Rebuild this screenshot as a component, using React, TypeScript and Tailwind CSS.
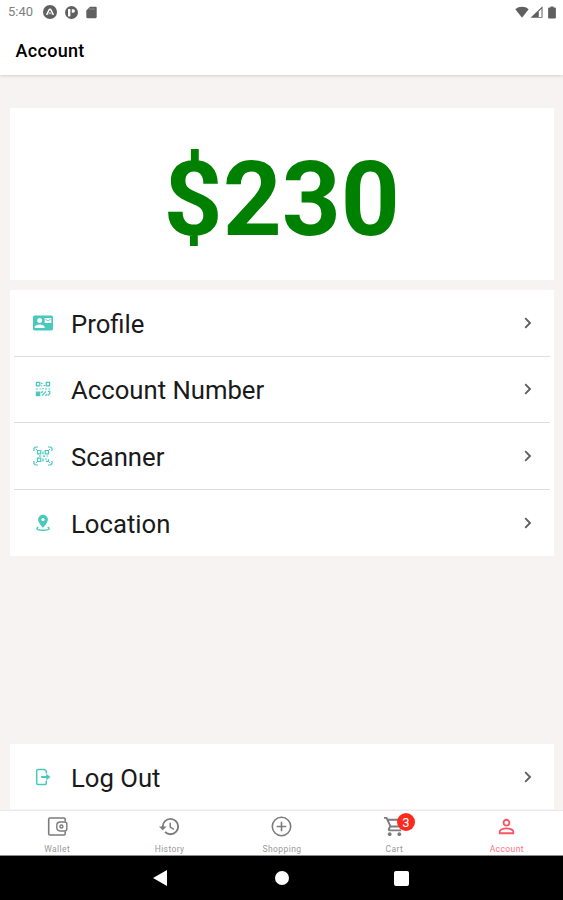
import type { ReactNode } from 'react';
import { MdContactMail, MdHistory, MdOutlineShoppingCart, MdPersonOutline } from 'react-icons/md';

function QrIcon() {
  return (
    <svg viewBox="0 0 16 16" className="w-4 h-4" fill="none" stroke="currentColor" strokeWidth="1.200">
      <path d="M1.400 1.400h3.400v3.400H1.400ZM11.200 1.400h3.400v3.400h-3.400Z" />
      <path d="M6 2.300h1.500M8.600 4.600h1.600M6 5h1.300M.8 8H3M4.500 8h1.400M7.300 7.600h1.500M10 8h2M13.500 8h1.700" />
      <path d="M1.400 11.200h3.400v3.400H1.400Z" fill="currentColor" />
      <path d="m6.300 12 1.500-1.800M7 14.600l4-4.300M10.400 14.800l1.800-1.800M12.800 10.400h2v2l-2 2.200" />
    </svg>
  );
}

function ScannerIcon() {
  return (
    <svg viewBox="0 0 20 20" className="w-5 h-5" fill="none" stroke="currentColor" strokeWidth="1.200">
      <path d="M1 5V2.300L2.300 1H5M15 1h2.700L19 2.300V5M19 15v2.700L17.700 19H15M5 19H2.300L1 17.700V15" />
      <path d="M4.500 4.500h3.300v3.300H4.500ZM12.200 4.500h3.300v3.300h-3.300ZM4.500 12.200h3.300v3.300H4.500Z" />
      <path d="m2.800 2.800 2 2M17.200 2.800l-2 2M2.800 17.200l2-2M17.200 17.200l-2-2" strokeWidth="1" />
      <path d="M6 10h2.300M10 5.500v2.700M9.800 10.200h2.500M13.700 10h1.500M10 12.400v3M11.800 13h2M13 15.300h2.500v-2" />
    </svg>
  );
}

function LocationIcon() {
  return (
    <svg viewBox="0 0 16 18" className="w-4 h-[18px]" fill="none">
      <path
        d="M8 .7a4.900 4.900 0 0 0-4.900 4.900C3.100 9 8 13.800 8 13.800S12.900 9 12.900 5.600A4.900 4.900 0 0 0 8 .7Zm0 6.600a1.700 1.700 0 1 1 0-3.400 1.700 1.700 0 0 1 0 3.400Z"
        fill="currentColor"
      />
      <path d="M3.400 13.200c-1.200.3-1.500.8-1.500 1.300 0 1.200 2.700 1.800 6.100 1.800s6.100-.6 6.100-1.800c0-.5-.3-1-1.500-1.300" stroke="currentColor" strokeWidth="1.400" />
    </svg>
  );
}

function LogOutIcon() {
  return (
    <svg viewBox="0 0 16 18" className="w-4 h-[18px]" fill="none">
      <path d="M11.300 5.500V3.300L9.600 1.500H2.900a1.200 1.200 0 0 0-1.200 1.200v12.600a1.200 1.200 0 0 0 1.200 1.200h7.200a1.200 1.200 0 0 0 1.200-1.200v-2.700" stroke="currentColor" strokeWidth="1.500" />
      <path d="M6.200 9h7" stroke="currentColor" strokeWidth="2" />
      <path d="M11.300 5.700 15.500 9l-4.200 3.300Z" fill="currentColor" />
    </svg>
  );
}

function WalletIcon() {
  return (
    <svg viewBox="0 0 23 23" className="w-[23px] h-[23px]" fill="none" stroke="currentColor" strokeWidth="1.600">
      <path d="M19.200 6.500V4.300c0-.8-.5-1.300-1.300-1.300H4c-.8 0-1.300.5-1.300 1.300v14.400c0 .8.500 1.300 1.300 1.300h13.900c.8 0 1.300-.5 1.300-1.300v-2.200" />
      <path d="M14.200 7h4.600a2 2 0 0 1 2 2v5a2 2 0 0 1-2 2h-4.600a3.400 3.400 0 0 1-3.400-3.400v-2.200A3.400 3.400 0 0 1 14.200 7Z" strokeWidth="1.400" />
      <circle cx="15.400" cy="11.500" r="1.500" strokeWidth="1.400" />
    </svg>
  );
}

function PlusCircleIcon() {
  return (
    <svg viewBox="0 0 23 23" className="w-[23px] h-[23px]" fill="none" stroke="currentColor" strokeWidth="1.600">
      <circle cx="11.500" cy="11.500" r="9.200" />
      <path d="M11.500 6.700v9.600M6.700 11.500h9.600" />
    </svg>
  );
}

const menuItems = [
  { label: 'Profile', icon: <MdContactMail className="w-5 h-5" /> },
  { label: 'Account Number', icon: <QrIcon /> },
  { label: 'Scanner', icon: <ScannerIcon /> },
  { label: 'Location', icon: <LocationIcon /> },
];

const tabs = [
  { label: 'Wallet', icon: <WalletIcon /> },
  { label: 'History', icon: <MdHistory className="w-[23px] h-[23px]" /> },
  { label: 'Shopping', icon: <PlusCircleIcon /> },
  { label: 'Cart', icon: <MdOutlineShoppingCart className="w-[23px] h-[23px]" />, badge: 3 },
  { label: 'Account', icon: <MdPersonOutline className="w-[23px] h-[23px]" />, active: true },
];

function MenuRow({ label, icon }: { label: string; icon: ReactNode }) {
  return (
    <button className="flex items-center w-full h-[65.6px] pl-[22.500px] pr-[21px] text-left">
      <span className="flex w-5 justify-center text-[#48c9bd]">{icon}</span>
      <span className="ml-[18.500px] mt-[2px] flex-1 text-[25.700px] leading-8 text-[#1a1a1a]">{label}</span>
      <svg viewBox="0 0 10 14" className="w-[10px] h-[14px]" fill="none">
        <path d="m2.200 2.200 4.800 4.800-4.800 4.800" stroke="#606060" strokeWidth="1.900" />
      </svg>
    </button>
  );
}

function StatusBar() {
  return (
    <div className="flex items-center h-6 pl-2 pr-[7px] text-[#606060]">
      <span className="w-[35px] text-[13px] leading-6 text-[#808080]">5:40</span>
      <svg viewBox="0 0 14 14" className="w-[14px] h-[14px] mr-[8px]">
        <circle cx="7" cy="7" r="7" fill="currentColor" />
        <path d="m3.600 9.800 2.500-5c.4-.8 1.400-.8 1.800 0l2.500 5" fill="none" stroke="#fff" strokeWidth="1.500" />
        <path d="m5.800 9.300 1.200-1.800 1.200 1.800" fill="none" stroke="#fff" strokeWidth=".8" />
      </svg>
      <svg viewBox="0 0 14 14" className="w-[13px] h-[13px] mr-[8px]">
        <circle cx="7" cy="7" r="7" fill="currentColor" />
        <path d="M3.200 3.200h2.600v8H3.200Z" fill="#fff" />
        <path d="M7.300 3.400h1.500a1.700 1.700 0 0 1 0 3.800H7.300Z" fill="#fff" />
      </svg>
      <svg viewBox="0 0 11 13" className="w-[11px] h-[13px]">
        <path d="M4 .7h5.500c.7 0 1.200.5 1.200 1.200v9.200c0 .7-.5 1.200-1.200 1.200h-8c-.7 0-1.200-.5-1.200-1.200V4.400Z" fill="currentColor" />
        <path d="M4 2v2M6 2v2M8 2v2" stroke="#999" strokeWidth=".8" />
      </svg>
      <div className="flex-1" />
      <svg viewBox="0 0 14 12" className="w-[14px] h-3 mr-px">
        <path d="M7 11.800.3 3.200C3.800-.1 10.200-.1 13.700 3.200Z" fill="currentColor" />
      </svg>
      <svg viewBox="0 0 13 12" className="w-[13px] h-3 mr-[5px]">
        <path d="M.5 11.800 12.500.2v11.600Z" fill="currentColor" />
        <path d="M8.800 5.400 11.500 2.700v8.200H8.800Z" fill="#fff" />
      </svg>
      <svg viewBox="0 0 8 13" className="w-2 h-[13px]">
        <path d="M2.500.5h3v1H7c.5 0 .9.4.9.900v9.200c0 .5-.4.900-.9.900H1c-.5 0-.9-.4-.9-.9V2.400c0-.5.4-.9.900-.9h1.500Z" fill="currentColor" />
      </svg>
    </div>
  );
}

function TabBar() {
  return (
    <nav className="grid grid-cols-5 h-[46px] shrink-0 pl-px border-t border-[#ebe9e9] border-b border-b-[#8c8c8c] bg-white">
      {tabs.map(({ label, icon, badge, active }) => (
        <button
          key={label}
          className={`flex flex-col items-center pt-1 ${active ? 'text-[#f75564]' : 'text-[#7c7c7c]'}`}
        >
          <span className="relative">
            {icon}
            {badge && (
              <span className="absolute -top-[2px] left-[14px] flex items-center justify-center w-[18px] h-[18px] rounded-full bg-[#fb2a20] text-[13px] leading-none text-white">
                {badge}
              </span>
            )}
          </span>
          <span className={`mt-[6px] text-[8.500px] leading-[11px] tracking-[0.4px] ${active ? 'text-[#f87480]' : 'text-[#999999]'}`}>
            {label}
          </span>
        </button>
      ))}
    </nav>
  );
}

export default function App() {
  return (
    <div className="flex flex-col w-[563px] h-[900px] overflow-hidden bg-[#f6f3f2] font-[Roboto,sans-serif]">
      <header className="h-[75px] shrink-0 bg-white shadow-[0_1px_3px_rgba(0,0,0,0.14)]">
        <StatusBar />
        <h1 className="pl-[15.500px] pt-[14px] text-[18px] leading-[26px] font-medium tracking-[0.3px] text-black">Account</h1>
      </header>

      <main className="flex flex-col flex-1 pl-[10px] pr-[9.500px] pt-[33px]">
        {/* Balance */}
        <section className="flex items-center justify-center h-[172px] pt-[11px] bg-white">
          <span className="text-[103px] leading-none font-bold text-[#008000]">$230</span>
        </section>

        {/* Menu */}
        <section className="mt-[10px] h-[266px] bg-white">
          {menuItems.map((item, i) => (
            <div key={item.label}>
              {i > 0 && <div className="mx-1 h-px bg-[#dedede]" />}
              <MenuRow {...item} />
            </div>
          ))}
        </section>

        <section className="mt-auto mb-[1px] h-[65px] bg-white">
          <MenuRow label="Log Out" icon={<LogOutIcon />} />
        </section>
      </main>

      <TabBar />

      {/* System navigation */}
      <div className="grid grid-cols-[180px_1fr_1fr_101px] items-center h-11 shrink-0 bg-black">
        <svg viewBox="0 0 14 16" className="w-[14px] h-4 ml-[153px]">
          <path d="M14 0v16L0 8Z" fill="#fff" />
        </svg>
        <div className="w-[14px] h-[14px] ml-[95px] rounded-full bg-white" />
        <div className="w-[15px] h-[15px] ml-[73px] rounded-[2px] bg-white" />
      </div>
    </div>
  );
}
